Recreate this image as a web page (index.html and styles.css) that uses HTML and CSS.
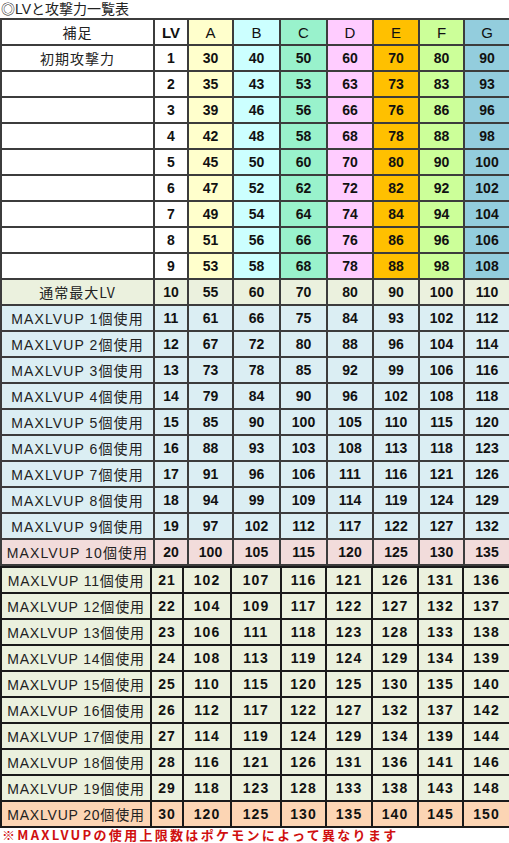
FILE: index.html
```html
<!DOCTYPE html>
<html lang="ja">
<head>
<meta charset="utf-8">
<title>LVと攻撃力一覧表</title>
<link rel="stylesheet" href="styles.css">
</head>
<body>
<div class="title">◎LVと攻撃力一覧表</div>
<table class="tbl top">
  <colgroup>
    <col class="w-note1"><col class="w-lv1"><col class="w-a1"><col class="w-b1"><col class="w-c1"><col class="w-d1"><col class="w-e1"><col class="w-f1"><col class="w-g1">
  </colgroup>
  <tr class="head"><td class="note jp">補足</td><td class="lv">LV</td><td class="ca">A</td><td class="cb">B</td><td class="cc">C</td><td class="cd">D</td><td class="ce">E</td><td class="cf">F</td><td class="cg">G</td></tr>
  <tr><td class="note jp">初期攻撃力</td><td class="lv">1</td><td class="ca">30</td><td class="cb">40</td><td class="cc">50</td><td class="cd">60</td><td class="ce">70</td><td class="cf">80</td><td class="cg">90</td></tr>
  <tr><td class="note"></td><td class="lv">2</td><td class="ca">35</td><td class="cb">43</td><td class="cc">53</td><td class="cd">63</td><td class="ce">73</td><td class="cf">83</td><td class="cg">93</td></tr>
  <tr><td class="note"></td><td class="lv">3</td><td class="ca">39</td><td class="cb">46</td><td class="cc">56</td><td class="cd">66</td><td class="ce">76</td><td class="cf">86</td><td class="cg">96</td></tr>
  <tr><td class="note"></td><td class="lv">4</td><td class="ca">42</td><td class="cb">48</td><td class="cc">58</td><td class="cd">68</td><td class="ce">78</td><td class="cf">88</td><td class="cg">98</td></tr>
  <tr><td class="note"></td><td class="lv">5</td><td class="ca">45</td><td class="cb">50</td><td class="cc">60</td><td class="cd">70</td><td class="ce">80</td><td class="cf">90</td><td class="cg">100</td></tr>
  <tr><td class="note"></td><td class="lv">6</td><td class="ca">47</td><td class="cb">52</td><td class="cc">62</td><td class="cd">72</td><td class="ce">82</td><td class="cf">92</td><td class="cg">102</td></tr>
  <tr><td class="note"></td><td class="lv">7</td><td class="ca">49</td><td class="cb">54</td><td class="cc">64</td><td class="cd">74</td><td class="ce">84</td><td class="cf">94</td><td class="cg">104</td></tr>
  <tr><td class="note"></td><td class="lv">8</td><td class="ca">51</td><td class="cb">56</td><td class="cc">66</td><td class="cd">76</td><td class="ce">86</td><td class="cf">96</td><td class="cg">106</td></tr>
  <tr><td class="note"></td><td class="lv">9</td><td class="ca">53</td><td class="cb">58</td><td class="cc">68</td><td class="cd">78</td><td class="ce">88</td><td class="cf">98</td><td class="cg">108</td></tr>
  <tr class="r-max"><td class="note jp">通常最大LV</td><td class="lv">10</td><td>55</td><td>60</td><td>70</td><td>80</td><td>90</td><td>100</td><td>110</td></tr>
  <tr class="r-up"><td class="note">MAXLVUP 1個使用</td><td class="lv">11</td><td>61</td><td>66</td><td>75</td><td>84</td><td>93</td><td>102</td><td>112</td></tr>
  <tr class="r-up"><td class="note">MAXLVUP 2個使用</td><td class="lv">12</td><td>67</td><td>72</td><td>80</td><td>88</td><td>96</td><td>104</td><td>114</td></tr>
  <tr class="r-up"><td class="note">MAXLVUP 3個使用</td><td class="lv">13</td><td>73</td><td>78</td><td>85</td><td>92</td><td>99</td><td>106</td><td>116</td></tr>
  <tr class="r-up"><td class="note">MAXLVUP 4個使用</td><td class="lv">14</td><td>79</td><td>84</td><td>90</td><td>96</td><td>102</td><td>108</td><td>118</td></tr>
  <tr class="r-up"><td class="note">MAXLVUP 5個使用</td><td class="lv">15</td><td>85</td><td>90</td><td>100</td><td>105</td><td>110</td><td>115</td><td>120</td></tr>
  <tr class="r-up"><td class="note">MAXLVUP 6個使用</td><td class="lv">16</td><td>88</td><td>93</td><td>103</td><td>108</td><td>113</td><td>118</td><td>123</td></tr>
  <tr class="r-up"><td class="note">MAXLVUP 7個使用</td><td class="lv">17</td><td>91</td><td>96</td><td>106</td><td>111</td><td>116</td><td>121</td><td>126</td></tr>
  <tr class="r-up"><td class="note">MAXLVUP 8個使用</td><td class="lv">18</td><td>94</td><td>99</td><td>109</td><td>114</td><td>119</td><td>124</td><td>129</td></tr>
  <tr class="r-up"><td class="note">MAXLVUP 9個使用</td><td class="lv">19</td><td>97</td><td>102</td><td>112</td><td>117</td><td>122</td><td>127</td><td>132</td></tr>
  <tr class="r-ten"><td class="note">MAXLVUP 10個使用</td><td class="lv">20</td><td>100</td><td>105</td><td>115</td><td>120</td><td>125</td><td>130</td><td>135</td></tr>
</table>
<table class="tbl bottom">
  <colgroup>
    <col class="w-note2"><col class="w-lv2"><col class="w-a2"><col class="w-b2"><col class="w-c2"><col class="w-d2"><col class="w-e2"><col class="w-f2"><col class="w-g2">
  </colgroup>
  <tr class="r-ext"><td class="note">MAXLVUP 11個使用</td><td class="lv">21</td><td>102</td><td>107</td><td>116</td><td>121</td><td>126</td><td>131</td><td>136</td></tr>
  <tr class="r-ext"><td class="note">MAXLVUP 12個使用</td><td class="lv">22</td><td>104</td><td>109</td><td>117</td><td>122</td><td>127</td><td>132</td><td>137</td></tr>
  <tr class="r-ext"><td class="note">MAXLVUP 13個使用</td><td class="lv">23</td><td>106</td><td>111</td><td>118</td><td>123</td><td>128</td><td>133</td><td>138</td></tr>
  <tr class="r-ext"><td class="note">MAXLVUP 14個使用</td><td class="lv">24</td><td>108</td><td>113</td><td>119</td><td>124</td><td>129</td><td>134</td><td>139</td></tr>
  <tr class="r-ext"><td class="note">MAXLVUP 15個使用</td><td class="lv">25</td><td>110</td><td>115</td><td>120</td><td>125</td><td>130</td><td>135</td><td>140</td></tr>
  <tr class="r-ext"><td class="note">MAXLVUP 16個使用</td><td class="lv">26</td><td>112</td><td>117</td><td>122</td><td>127</td><td>132</td><td>137</td><td>142</td></tr>
  <tr class="r-ext"><td class="note">MAXLVUP 17個使用</td><td class="lv">27</td><td>114</td><td>119</td><td>124</td><td>129</td><td>134</td><td>139</td><td>144</td></tr>
  <tr class="r-ext"><td class="note">MAXLVUP 18個使用</td><td class="lv">28</td><td>116</td><td>121</td><td>126</td><td>131</td><td>136</td><td>141</td><td>146</td></tr>
  <tr class="r-ext"><td class="note">MAXLVUP 19個使用</td><td class="lv">29</td><td>118</td><td>123</td><td>128</td><td>133</td><td>138</td><td>143</td><td>148</td></tr>
  <tr class="r-last"><td class="note">MAXLVUP 20個使用</td><td class="lv">30</td><td>120</td><td>125</td><td>130</td><td>135</td><td>140</td><td>145</td><td>150</td></tr>
</table>
<div class="footnote">※MAXLVUPの使用上限数はポケモンによって異なります</div>
</body>
</html>
```

FILE: styles.css
```css
html, body {
  margin: 0;
  padding: 0;
  background: #ffffff;
}
body {
  width: 509px;
  font-family: "Liberation Sans", "Noto Sans CJK JP", sans-serif;
  color: #111;
}
.title {
  height: 18px;
  line-height: 18px;
  font-size: 14px;
  font-family: "Liberation Sans", "Noto Sans CJK JP", sans-serif;
  padding-left: 1px;
  color: #222;
}
.tbl {
  width: 509px;
  table-layout: fixed;
  border-collapse: collapse;
}
.tbl td {
  height: 24px;
  padding: 0;
  text-align: center;
  vertical-align: middle;
  font-size: 14px;
  font-weight: bold;
  white-space: nowrap;
  overflow: hidden;
}
.top td {
  border: 2px solid #3c3c3c;
}
.bottom td {
  border: 2px solid #1a1a1a;
  letter-spacing: 1px;
}
.tbl td.note {
  font-family: "Liberation Sans", "Noto Sans CJK JP", sans-serif;
  font-weight: normal;
  font-size: 14px;
  letter-spacing: 1.1px;
  color: #222;
}
.tbl td.jp {
  font-family: "Noto Sans CJK JP", sans-serif;
  letter-spacing: 1px;
}
.bottom td.note {
  letter-spacing: 0.8px;
}
.head td {
  font-weight: normal;
  font-size: 15px;
}
.head td.lv { font-weight: bold; }

.w-note1 { width: 153px; }
.w-lv1 { width: 34px; }
.w-a1 { width: 45px; }
.w-b1 { width: 47px; }
.w-c1 { width: 47px; }
.w-d1 { width: 46px; }
.w-e1 { width: 46px; }
.w-f1 { width: 45px; }
.w-g1 { width: 46px; }

.w-note2 { width: 150px; }
.w-lv2 { width: 32px; }
.w-a2 { width: 48px; }
.w-b2 { width: 50px; }
.w-c2 { width: 45px; }
.w-d2 { width: 46px; }
.w-e2 { width: 46px; }
.w-f2 { width: 45px; }
.w-g2 { width: 47px; }

.ca { background: #ffffcc; }
.cb { background: #ccffff; }
.cc { background: #99f2cc; }
.cd { background: #ffccff; }
.ce { background: #ffc000; }
.cf { background: #ccff99; }
.cg { background: #93cddd; }

.r-max td { background: #ebf1de; }
.r-up td { background: #dbeef3; }
.r-ten td { background: #f2dcdb; }
.r-ext td { background: #ebf1de; }
.r-last td { background: #fcd5b4; }

.footnote {
  height: 15px;
  line-height: 14px;
  font-family: "Noto Sans CJK JP", sans-serif;
  font-weight: bold;
  font-size: 13px;
  letter-spacing: 2.3px;
  color: #d01010;
  padding-left: 2px;
  white-space: nowrap;
}
```
